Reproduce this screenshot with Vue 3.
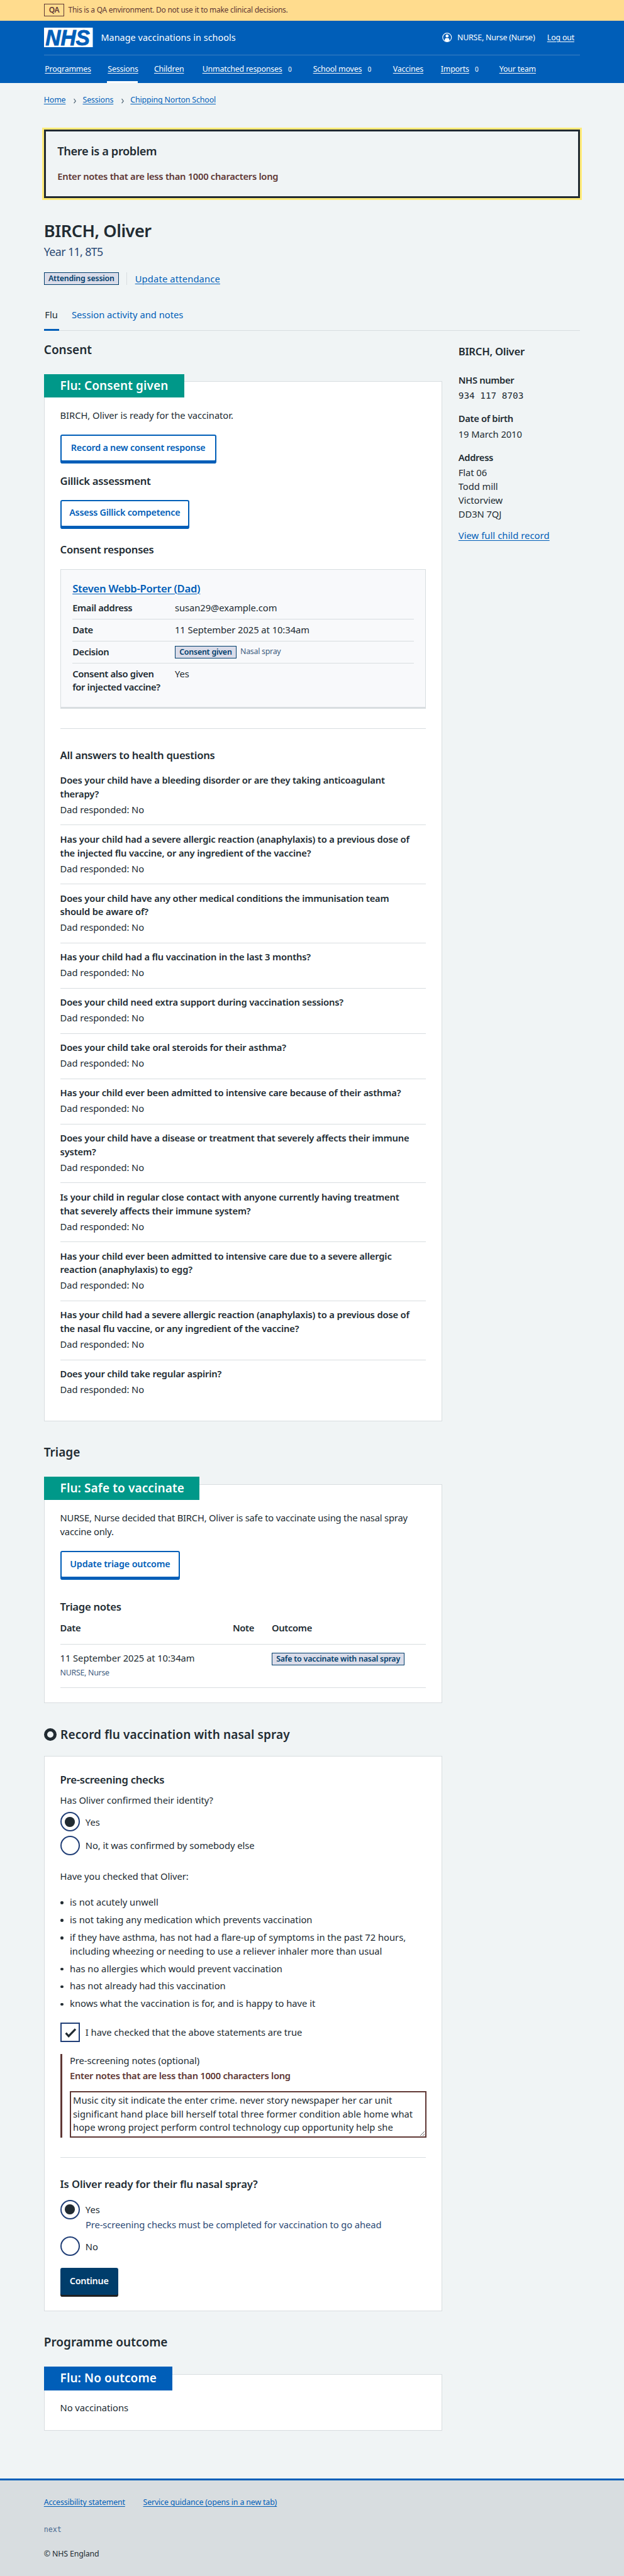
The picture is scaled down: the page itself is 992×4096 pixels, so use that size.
<script setup>
const navItems = [
  { label: 'Programmes', cls: 'n1' },
  { label: 'Sessions', cls: 'n2', active: true },
  { label: 'Children', cls: 'n3' },
  { label: 'Unmatched responses', cls: 'n4', count: 0 },
  { label: 'School moves', cls: 'n5', count: 0 },
  { label: 'Vaccines', cls: 'n6' },
  { label: 'Imports', cls: 'n7', count: 0 },
  { label: 'Your team', cls: 'n8' },
]

const questions = [
  ['Does your child have a bleeding disorder or are they taking anticoagulant', 'therapy?'],
  ['Has your child had a severe allergic reaction (anaphylaxis) to a previous dose of', 'the injected flu vaccine, or any ingredient of the vaccine?'],
  ['Does your child have any other medical conditions the immunisation team', 'should be aware of?'],
  ['Has your child had a flu vaccination in the last 3 months?'],
  ['Does your child need extra support during vaccination sessions?'],
  ['Does your child take oral steroids for their asthma?'],
  ['Has your child ever been admitted to intensive care because of their asthma?'],
  ['Does your child have a disease or treatment that severely affects their immune', 'system?'],
  ['Is your child in regular close contact with anyone currently having treatment', 'that severely affects their immune system?'],
  ['Has your child ever been admitted to intensive care due to a severe allergic', 'reaction (anaphylaxis) to egg?'],
  ['Has your child had a severe allergic reaction (anaphylaxis) to a previous dose of', 'the nasal flu vaccine, or any ingredient of the vaccine?'],
  ['Does your child take regular aspirin?'],
]

const checks = [
  ['is not acutely unwell'],
  ['is not taking any medication which prevents vaccination'],
  ['if they have asthma, has not had a flare-up of symptoms in the past 72 hours,', 'including wheezing or needing to use a reliever inhaler more than usual'],
  ['has no allergies which would prevent vaccination'],
  ['has not already had this vaccination'],
  ['knows what the vaccination is for, and is happy to have it'],
]

const notes = [
  'Music city sit indicate the enter crime. never story newspaper her car unit',
  'significant hand place bill herself total three former condition able home what',
  'hope wrong project perform control technology cup opportunity help she',
].join('\n')
</script>

<template>
  <div class="page">
    <div class="banner">
      <span class="banner-tag">QA</span>
      <span class="banner-text">This is a QA environment. Do not use it to make clinical decisions.</span>
    </div>

    <header class="header">
      <div class="header-top">
        <svg class="logo" viewBox="0 0 100 40" width="100" height="40">
          <rect width="100" height="40" fill="#fff" />
          <text x="3" y="36.5" textLength="91" lengthAdjust="spacingAndGlyphs">NHS</text>
        </svg>
        <span class="service">Manage vaccinations in schools</span>
        <div class="account">
          <svg width="20" height="22" viewBox="0 0 20 22">
            <circle cx="10" cy="11" r="9" fill="none" stroke="#fff" stroke-width="1.5" />
            <circle cx="10" cy="8" r="3.1" fill="#fff" />
            <path d="M5.300 18.200v-2.300c0-2.200 1.400-3.800 3.200-3.800h3c1.800 0 3.200 1.600 3.200 3.800v2.300a9 9 0 0 1-9.400 0z" fill="#fff" />
          </svg>
          <span class="user">NURSE, Nurse (Nurse)</span>
          <a class="logout">Log out</a>
        </div>
      </div>
      <nav class="nav">
        <div v-for="n in navItems" :key="n.label" class="nav-item" :class="[n.cls, { active: n.active }]">
          <a>{{ n.label }}</a><span v-if="n.count !== undefined" class="count">{{ n.count }}</span>
        </div>
      </nav>
    </header>

    <div class="container">
      <nav class="crumbs">
        <a>Home</a>
        <svg width="8" height="12" viewBox="0 0 8 12"><path d="M2 1.500l3.500 4.500L2 10.500" fill="none" stroke="#4c6272" stroke-width="1.500" /></svg>
        <a>Sessions</a>
        <svg width="8" height="12" viewBox="0 0 8 12"><path d="M2 1.500l3.500 4.500L2 10.500" fill="none" stroke="#4c6272" stroke-width="1.500" /></svg>
        <a>Chipping Norton School</a>
      </nav>

      <section class="error-summary">
        <h2>There is a problem</h2>
        <p class="err">Enter notes that are less than 1000 characters long</p>
      </section>

      <h1>BIRCH, Oliver</h1>
      <p class="caption">Year 11, 8T5</p>
      <div class="status">
        <span class="tag">Attending session</span>
        <a class="link">Update attendance</a>
      </div>
      <div class="tabs">
        <span class="tab current">Flu</span>
        <span class="tab other">Session activity and notes</span>
      </div>

      <div class="columns">
        <main class="main">
          <h2 class="sec first">Consent</h2>
          <section class="card consent">
            <div class="label l1">Flu: Consent given</div>
            <p class="lead">BIRCH, Oliver is ready for the vaccinator.</p>
            <button class="btn b1">Record a new consent response</button>
            <h3 class="gillick">Gillick assessment</h3>
            <button class="btn b2">Assess Gillick competence</button>
            <h3 class="responses">Consent responses</h3>
            <div class="inner">
              <h3 class="who"><a class="link">Steven Webb-Porter (Dad)</a></h3>
              <div class="rows">
                <div class="row"><b>Email address</b><span>susan29@example.com</span></div>
                <div class="row"><b>Date</b><span>11 September 2025 at 10:34am</span></div>
                <div class="row"><b>Decision</b><span class="decision"><span class="tag">Consent given</span><small>Nasal spray</small></span></div>
                <div class="row"><b>Consent also given<br>for injected vaccine?</b><span>Yes</span></div>
              </div>
            </div>
            <hr>
            <h3 class="answers">All answers to health questions</h3>
            <dl class="questions">
              <div v-for="(q, i) in questions" :key="i" class="qa">
                <dt><span v-for="line in q" :key="line" class="line">{{ line }}</span></dt>
                <dd>Dad responded: No</dd>
              </div>
            </dl>
          </section>

          <h2 class="sec">Triage</h2>
          <section class="card triage">
            <div class="label l2">Flu: Safe to vaccinate</div>
            <p class="lead">NURSE, Nurse decided that BIRCH, Oliver is safe to vaccinate using the nasal spray<br>vaccine only.</p>
            <button class="btn b3">Update triage outcome</button>
            <h3 class="tnotes">Triage notes</h3>
            <div class="trow thead"><b>Date</b><b>Note</b><b>Outcome</b></div>
            <div class="trow tbody">
              <div>11 September 2025 at 10:34am<small>NURSE, Nurse</small></div>
              <div></div>
              <div><span class="tag">Safe to vaccinate with nasal spray</span></div>
            </div>
          </section>

          <h2 class="sec record"><i class="ring"></i><span>Record flu vaccination with nasal spray</span></h2>
          <section class="card form">
            <h3 class="pre">Pre-screening checks</h3>
            <p class="identity">Has Oliver confirmed their identity?</p>
            <div class="choice r1"><i class="radio on"></i><span>Yes</span></div>
            <div class="choice r2"><i class="radio"></i><span>No, it was confirmed by somebody else</span></div>
            <p class="have">Have you checked that Oliver:</p>
            <ul class="checks">
              <li v-for="(c, i) in checks" :key="i"><span v-for="line in c" :key="line" class="line">{{ line }}</span></li>
            </ul>
            <div class="choice cb">
              <i class="box"><svg width="35" height="35" viewBox="0 0 36 36"><path d="M8.800 19.500l6 6.500L29.200 11" fill="none" stroke="#212b32" stroke-width="4.200" /></svg></i>
              <span>I have checked that the above statements are true</span>
            </div>
            <div class="error-group">
              <p>Pre-screening notes (optional)</p>
              <p class="err">Enter notes that are less than 1000 characters long</p>
              <textarea :value="notes" spellcheck="false"></textarea>
            </div>
            <hr>
            <h3 class="ready">Is Oliver ready for their flu nasal spray?</h3>
            <div class="choice r3"><i class="radio on"></i><span>Yes</span></div>
            <p class="hint">Pre-screening checks must be completed for vaccination to go ahead</p>
            <div class="choice r4"><i class="radio"></i><span>No</span></div>
            <button class="btn primary">Continue</button>
          </section>

          <h2 class="sec">Programme outcome</h2>
          <section class="card outcome">
            <div class="label blue l3">Flu: No outcome</div>
            <p class="lead">No vaccinations</p>
          </section>
        </main>

        <aside class="side">
          <h3>BIRCH, Oliver</h3>
          <b class="nhs">NHS number</b>
          <span class="mono">934 117 8703</span>
          <b>Date of birth</b>
          <span>19 March 2010</span>
          <b>Address</b>
          <span>Flat 06<br>Todd mill<br>Victorview<br>DD3N 7QJ</span>
          <a class="link">View full child record</a>
        </aside>
      </div>
    </div>

    <footer class="footer">
      <div class="flinks">
        <a class="link">Accessibility statement</a>
        <a class="link">Service guidance (opens in a new tab)</a>
      </div>
      <p class="next">next</p>
      <p class="copy">© NHS England</p>
    </footer>
  </div>
</template>

<style>
html, body { margin: 0; background: #d8dde0; overflow: hidden; }
</style>

<style scoped>
.page {
  zoom: 0.7753;
  width: 100%;
  height: 5284px;
  display: flex;
  flex-direction: column;
  background: #f0f4f5;
  color: #212b32;
  font: 400 19px/28px "Noto Sans", "Open Sans", sans-serif;
  letter-spacing: -0.06px;
  white-space: nowrap;
  overflow: hidden;
}
* { box-sizing: border-box; }
h1, h2, h3, p, ul, dl, dd, dt { margin: 0; padding: 0; }
h1, h2, h3, b { font-weight: 600; letter-spacing: -0.35px; }
b { letter-spacing: -0.42px; }
small { font-size: 16px; line-height: 24px; color: #3f5d80; letter-spacing: -0.35px; }
.link { color: #005eb8; text-decoration: underline; text-underline-offset: 3px; text-decoration-thickness: 1px; }
hr { border: 0; height: 1px; margin: 40px 0 0; background: #d8dde0; }

.banner { height: 42px; padding: 8px 0 0 90px; background: #ffdc8e; color: #603835; display: flex; gap: 8px; font-size: 15.5px; line-height: 26px; letter-spacing: -0.35px; }
.banner-tag { width: 42px; height: 26px; border: 1px solid #603835; text-align: center; font-weight: 600; line-height: 24px; }

.header { height: 128px; background: #005eb8; color: #fff; padding: 0 90px; }
.header-top { height: 72px; border-bottom: 1px solid #3c7fc2; display: flex; align-items: center; }
.logo { overflow: visible; }
.logo text { font: italic 700 46px/1 "Liberation Sans", sans-serif; fill: #005eb8; stroke: #005eb8; stroke-width: 1.2px; letter-spacing: 0; }
.service { margin-left: 17px; font-size: 18.5px; letter-spacing: 0.1px; }
.account { margin-left: auto; margin-right: 12px; display: flex; align-items: center; font-size: 16px; letter-spacing: -0.25px; }
.user { margin-left: 11px; }
.logout { margin-left: 25px; text-decoration: underline; text-underline-offset: 3px; }
.nav { display: flex; height: 56px; font-size: 16px; line-height: 57px; letter-spacing: -0.25px; }
.nav-item { padding: 0 2px; display: flex; flex: none; }
.nav-item a { text-decoration: underline; text-underline-offset: 3px; }
.nav-item.active { border-bottom: 4px solid #fff; }
.count { font-size: 13px; margin-left: 12px; }
.n1 { width: 97px; margin-right: 32px; }
.n2 { width: 63px; margin-right: 32px; }
.n3 { width: 67px; margin-right: 32px; }
.n4 { width: 187px; margin-right: 40px; }
.n5 { width: 124px; margin-right: 40px; }
.n6 { width: 66px; margin-right: 32px; }
.n7 { width: 80px; margin-right: 40px; }

.container { margin: 0 90px; height: 4913px; }
.crumbs { margin-top: 24px; height: 24px; font-size: 16px; line-height: 24px; letter-spacing: -0.2px; display: flex; align-items: center; }
.crumbs a { color: #005eb8; text-decoration: underline; text-underline-offset: 3px; }
.crumbs svg { margin: 2px 12px 0 15px; }

.error-summary { margin-top: 48px; height: 140px; border: 4px solid #212b32; outline: 4px solid #ffeb78; padding: 24px; }
.error-summary h2 { font-size: 23.5px; line-height: 32px; letter-spacing: -0.5px; }
.err { color: #603835; font-weight: 600; letter-spacing: -0.35px; }
.error-summary .err { margin-top: 22px; }
h1 { margin-top: 45px; font-size: 35px; line-height: 44px; letter-spacing: -0.6px; }
.caption { margin-top: 6px; font-size: 23px; line-height: 32px; letter-spacing: -0.8px; color: #2c4a75; }
.status { margin-top: 26px; height: 26px; display: flex; align-items: center; }
.status .link { margin-left: 16px; padding-left: 16px; border-left: 1px solid #d8dde0; line-height: 26px; letter-spacing: 0.2px; }
.tag { display: inline-block; border: 1px solid #003d6b; background: #dadce9; color: #003d6b; font-size: 16px; font-weight: 600; line-height: 24px; height: 26px; padding: 0 8px; letter-spacing: -0.27px; }
.tabs { height: 93px; padding-top: 47.6px; display: flex; border-bottom: 1px solid #d8dde0; }
.tab { height: 45.4px; }
.tab.current { width: 31px; padding-left: 2px; border-bottom: 4px solid #005eb8; }
.tab.other { margin-left: 26px; color: #005eb8; letter-spacing: 0; }

.columns { display: flex; gap: 33px; }
.main { width: 817px; flex: none; }
.sec { margin-top: 48.3px; font-size: 24.5px; line-height: 32px; letter-spacing: 0; }
.sec.first { margin-top: 23.4px; }
.card { margin-top: 48.6px; background: #fff; border: 1px solid #d8dde0; padding: 0 32px; display: flow-root; }
.consent { height: 2133px; }
.triage { height: 450px; margin-top: 48.3px; }
.form { height: 1138px; margin-top: 28px; }
.outcome { height: 117px; margin-top: 48.8px; }
.label { margin: -16px 0 0 -33px; height: 48px; line-height: 47px; padding: 0 33px; width: 288px; background: #009889; color: #fff; font-size: 24.5px; font-weight: 600; letter-spacing: 0.15px; }
.label.l2 { width: 319px; }
.label.l3 { width: 263px; }
.label.blue { background: #005eb8; }
.lead { margin-top: 22.8px; }
.triage .lead { letter-spacing: -0.24px; }
.btn { display: block; height: 56px; margin: 25.2px 0 4px; border: 2.6px solid #005eb8; border-radius: 4px; box-shadow: 0 4px 0 #005eb8; background: #fff; color: #005eb8; padding: 0 0 3px; font: inherit; font-size: 18.5px; font-weight: 600; letter-spacing: -0.3px; text-align: center; }
.b1 { width: 320px; }
.b2 { width: 265px; }
.b3 { width: 246px; letter-spacing: -0.2px; }
h3 { font-size: 21.5px; line-height: 28px; }
.gillick { margin-top: 24.8px; }
.responses { margin-top: 32.5px; }
.inner { margin-top: 25.5px; height: 286px; border: 1px solid #d8dde0; border-bottom-width: 4px; background: #f8f9fb; padding: 24.5px 24px 0; }
.rows { margin-top: 4.5px; }
.row { display: flex; padding: 8px 0 7.7px; border-bottom: 1px solid #d8dde0; }
.row:last-child { border: 0; }
.row b { width: 210px; }
.decision { height: 28px; display: flex; align-items: center; }
.decision small { margin-left: 8px; }
.answers { margin-top: 40.5px; }
.questions { margin-top: 9.5px; }
.qa { padding: 15px 0 16.6px; border-bottom: 1px solid #d8dde0; }
.qa:last-child { border: 0; }
.line { display: block; }
dt { font-weight: 600; letter-spacing: -0.2px; }
dd { margin-top: 4px; }
.tnotes { margin-top: 44.5px; }
.trow { display: grid; grid-template-columns: 354px 80px 1fr; }
.thead { margin-top: 16px; height: 47.5px; border-bottom: 2px solid #d8dde0; }
.tbody { padding-top: 14.6px; height: 89px; border-bottom: 1px solid #d8dde0; }
.tbody small { display: block; margin-top: 3.5px; }
.tbody .tag { margin-top: 2px; }
.record { display: flex; align-items: center; letter-spacing: 0.15px; }
.ring { width: 26px; height: 26px; border: 7px solid #212b32; border-radius: 50%; margin-right: 8px; }
.pre { margin-top: 32.6px; }
.identity { margin-top: 15.6px; }
.choice { display: flex; align-items: flex-start; height: 40px; }
.choice span { margin: 6.6px 0 0 12px; }
.radio { width: 40px; height: 40px; border: 2.6px solid #213f77; border-radius: 50%; display: flex; align-items: center; justify-content: center; }
.radio.on::after { content: ""; width: 20px; height: 20px; border-radius: 50%; background: #212b32; }
.box { width: 40px; height: 40px; border: 2.6px solid #213f77; }
.box svg { display: block; }
.r1 { margin-top: 9.4px; }
.r2 { margin-top: 8px; }
.have { margin-top: 30.6px; }
.checks { margin-top: 24.6px; padding-left: 20px; list-style: none; letter-spacing: 0; }
.checks li { margin-bottom: 8px; position: relative; }
.checks li::before { content: ""; position: absolute; left: -19px; top: 12px; width: 6px; height: 6px; border-radius: 50%; background: #212b32; }
.cb { margin-top: 24.8px; }
.error-group { margin-top: 24px; height: 172px; border-left: 4px solid #603835; padding-left: 16px; }
.error-group .err { margin-top: 3px; }
textarea { display: block; margin: 17px 0 0; width: 731px; height: 96px; border: 2.6px solid #603835; border-radius: 0; padding: 3px 4px; background: #fff; color: #212b32; font: inherit; letter-spacing: 0.02px; white-space: pre; overflow: hidden; resize: both; }
.ready { margin-top: 40.5px; letter-spacing: -0.15px; }
.r3 { margin-top: 17.5px; }
.hint { margin: -1.4px 0 0 52px; color: #2c4a75; letter-spacing: -0.1px; }
.r4 { margin-top: 9.4px; }
.primary { margin-top: 24px; width: 119px; border-color: #003d6b; background: #003d6b; color: #fff; box-shadow: 0 4px 0 #212121; }

.side { display: flex; flex-direction: column; align-items: flex-start; padding-top: 28.5px; }
.side b { margin: 19px 0 4px; }
.side .nhs { margin-top: 32px; }
.side .link { margin-top: 16.6px; letter-spacing: 0.1px; }
.mono { font-family: "DejaVu Sans Mono", "Liberation Mono", monospace; font-size: 18.5px; letter-spacing: 0; }

.footer { flex: 1; background: #d8dde0; border-top: 4px solid #005eb8; padding: 34.2px 90px 0; font-size: 16px; line-height: 24px; letter-spacing: -0.2px; }
.flinks { display: flex; gap: 37px; }
.next { margin-top: 31.6px; color: #4a6a90; font-size: 15px; font-family: "DejaVu Sans Mono", monospace; letter-spacing: 0; }
.copy { margin-top: 26px; }
</style>
